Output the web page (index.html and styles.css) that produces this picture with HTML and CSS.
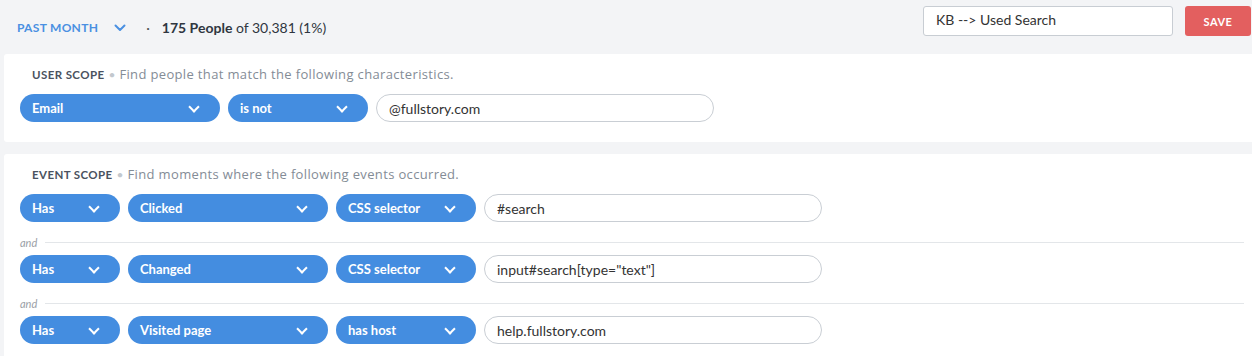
FILE: index.html
```html
<!DOCTYPE html>
<html lang="en">
<head>
  <meta charset="utf-8" />
  <title>Segment - KB --> Used Search</title>
  <link rel="stylesheet" href="styles.css">
</head>
<body>
  <div class="topbar">
    <button class="range">
      <span>Past Month</span>
      <svg class="range-caret" width="12" height="8" viewBox="0 0 12 8"><path d="M1.5 1.5 L6 6 L10.5 1.5" fill="none" stroke="currentColor" stroke-width="2" stroke-linecap="round" stroke-linejoin="round"/></svg>
    </button>
    <span class="sep">&middot;</span>
    <span class="count"><b>175 People</b> of 30,381 (1%)</span>
    <div class="spacer"></div>
    <input class="segment-name" type="text" value="KB --> Used Search">
    <button class="save-button">Save</button>
  </div>

  <div class="card">
    <div class="scope-title"><b>User Scope</b><span class="bullet">&bull;</span><span class="desc">Find people that match the following characteristics.</span></div>
    <div class="filter-row">
      <div class="pill w200">Email <i class="caret"></i></div>
      <div class="pill w140">is not <i class="caret"></i></div>
      <div class="value">@fullstory.com</div>
    </div>
  </div>

  <div class="card">
    <div class="scope-title"><b>Event Scope</b><span class="bullet">&bull;</span><span class="desc">Find moments where the following events occurred.</span></div>
    <div class="filter-row">
      <div class="pill w100">Has <i class="caret"></i></div>
      <div class="pill w200">Clicked <i class="caret"></i></div>
      <div class="pill w140">CSS selector <i class="caret"></i></div>
      <div class="value">#search</div>
    </div>
    <div class="and"><span>and</span></div>
    <div class="filter-row">
      <div class="pill w100">Has <i class="caret"></i></div>
      <div class="pill w200">Changed <i class="caret"></i></div>
      <div class="pill w140">CSS selector <i class="caret"></i></div>
      <div class="value">input#search[type="text"]</div>
    </div>
    <div class="and"><span>and</span></div>
    <div class="filter-row">
      <div class="pill w100">Has <i class="caret"></i></div>
      <div class="pill w200">Visited page <i class="caret"></i></div>
      <div class="pill w140">has host <i class="caret"></i></div>
      <div class="value">help.fullstory.com</div>
    </div>
  </div>
</body>
</html>
```

FILE: styles.css
```css
body {
  font-family: Lato, 'Open Sans', sans-serif;
  background-color: #f3f4f6;
  color: #333;
  margin: 0;
  padding: 0;
  overflow: hidden;
}

.topbar {
  height: 54px;
  display: flex;
  align-items: center;
  padding: 0 1px 0 17px;
  box-sizing: border-box;
}

.range {
  display: flex;
  align-items: center;
  background: none;
  border: none;
  padding: 0;
  font-family: inherit;
  font-size: 12px;
  font-weight: bold;
  letter-spacing: 0.3px;
  text-transform: uppercase;
  color: #4a90e2;
  cursor: pointer;
}

.range-caret {
  margin-left: 16px;
  margin-top: 2px;
}

.sep {
  margin: 0 12px 0 20px;
  color: #555;
  font-size: 14px;
}

.count {
  font-size: 14px;
  color: #2f3640;
}

.count b {
  font-weight: bold;
}

.spacer {
  flex: 1;
}

.segment-name {
  width: 250px;
  height: 30px;
  box-sizing: border-box;
  border: 1px solid #c8cdd3;
  border-radius: 3px;
  padding: 0 12px 3px;
  font-family: inherit;
  font-size: 14px;
  color: #333;
  margin-top: -12px;
}

.save-button {
  width: 66px;
  height: 30px;
  margin-left: 12px;
  margin-top: -12px;
  background-color: #e35f5f;
  color: white;
  border: none;
  border-radius: 3px;
  font-family: inherit;
  font-size: 11px;
  font-weight: bold;
  letter-spacing: 0.5px;
  text-transform: uppercase;
}

.card {
  background: white;
  border-radius: 3px;
  margin: 0 -8px 12px 4px;
  padding: 12px 16px 20px;
}

.scope-title {
  display: flex;
  align-items: center;
  height: 16px;
  padding-left: 12px;
  margin-bottom: 12px;
  white-space: nowrap;
}

.scope-title b {
  color: #4a5260;
  font-size: 11.5px;
  text-transform: uppercase;
  letter-spacing: 0.4px;
}

.bullet {
  color: #c3c8ce;
  font-size: 12px;
  margin: 0 4px 0 4px;
}

.desc {
  font-family: 'Open Sans', sans-serif;
  font-size: 13px;
  letter-spacing: 0.35px;
  line-height: 16px;
  color: #848c96;
}

.filter-row {
  display: flex;
  gap: 8px;
}

.pill {
  height: 28px;
  box-sizing: border-box;
  border-radius: 14px;
  background-color: #448de0;
  color: white;
  font-size: 13px;
  font-weight: bold;
  display: flex;
  align-items: center;
  padding-left: 12px;
  position: relative;
}

.w100 { width: 100px; }
.w140 { width: 140px; }
.w200 { width: 200px; }

.caret {
  position: absolute;
  right: 22px;
  top: 9px;
  width: 6px;
  height: 6px;
  border-right: 2px solid white;
  border-bottom: 2px solid white;
  transform: rotate(45deg);
}

.value {
  width: 338px;
  height: 28px;
  box-sizing: border-box;
  border: 1px solid #c9ced4;
  border-radius: 14px;
  padding-left: 12px;
  display: flex;
  align-items: center;
  font-size: 14px;
  color: #333;
}

.and {
  display: flex;
  align-items: center;
  height: 14px;
  margin: 13px 0 6px;
}

.and span {
  font-size: 11px;
  font-style: italic;
  color: #9aa0a6;
  margin-right: 8px;
}

.and::after {
  content: '';
  flex: 1;
  border-top: 1px solid #e3e6e9;
}
```
